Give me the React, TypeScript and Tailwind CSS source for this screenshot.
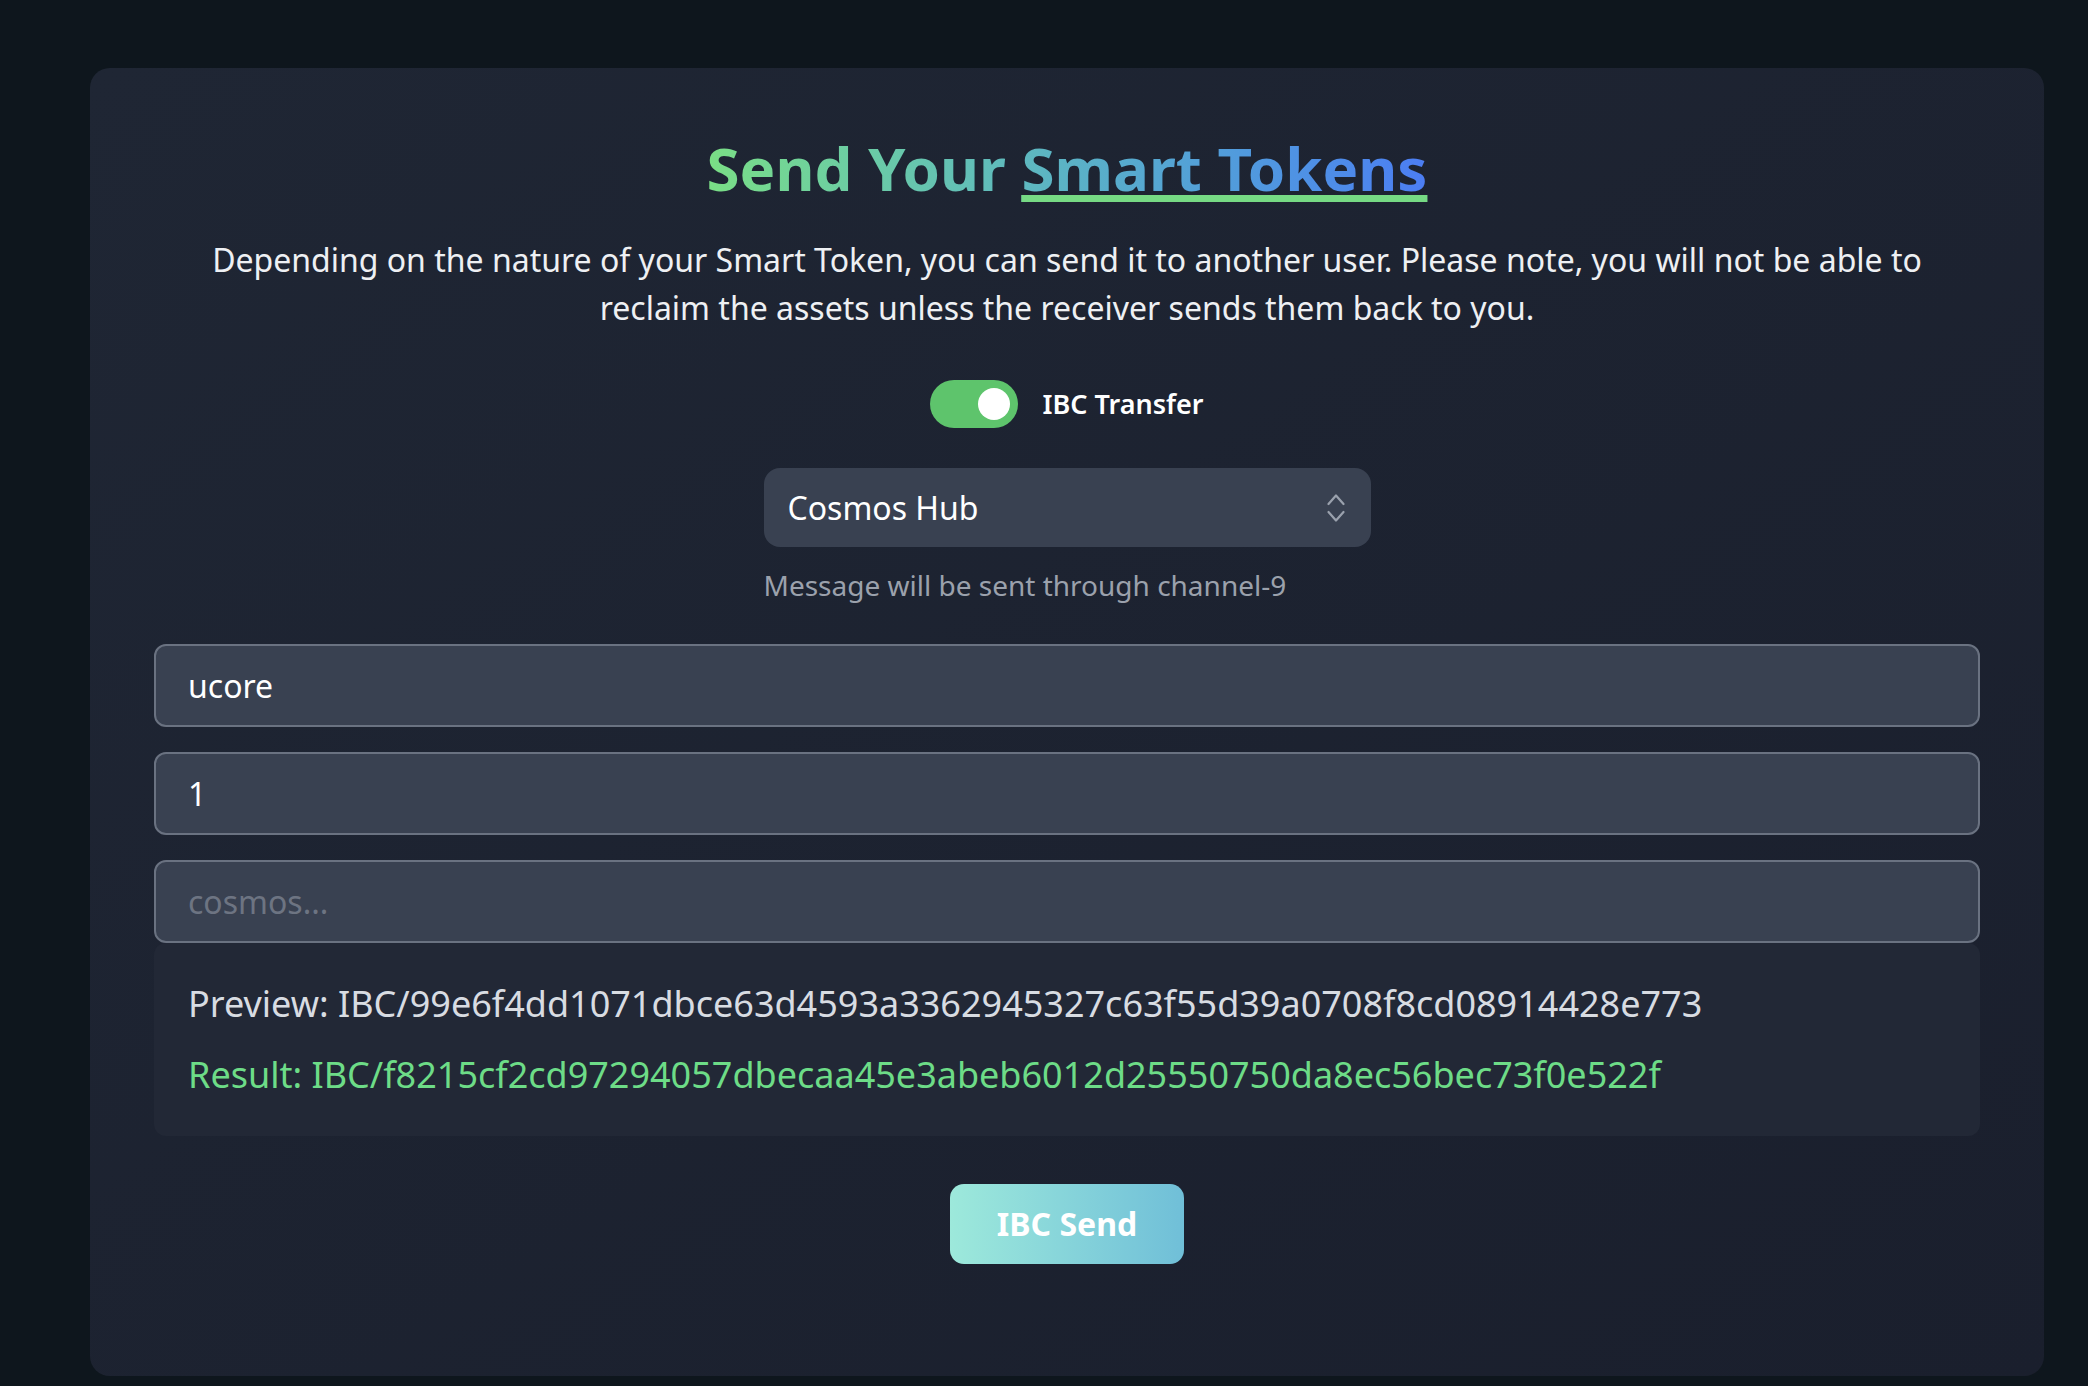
import { useState } from "react";

function ChevronUpDown() {
  return (
    <svg width="18" height="30" viewBox="0 0 18 30" fill="none" stroke="#9aa1ad" strokeWidth="2.2" strokeLinecap="round" strokeLinejoin="round">
      <path d="M1.5 11 L9 2.5 L16.5 11" />
      <path d="M1.5 19 L9 27.5 L16.5 19" />
    </svg>
  );
}

export default function App() {
  const [ibc, setIbc] = useState(true);

  return (
    <div className="min-h-screen bg-[#0e161d] pt-[68px] pl-[90px] pr-[44px] font-['Noto_Sans',sans-serif]">
      <div className="rounded-[20px] bg-gradient-to-br from-[#1f2634] to-[#1a1f2d] px-16 pt-[60px] pb-[112px]">
        {/* Heading */}
        <h1 className="text-center text-[60px] font-bold leading-[80px]">
          <span className="bg-gradient-to-r from-[#7ade85] to-[#4c7df3] bg-clip-text text-transparent">
            Send Your{" "}
            <span className="underline decoration-[#76da84] decoration-[length:7px] underline-offset-[4px]">
              Smart Tokens
            </span>
          </span>
        </h1>

        <p className="mx-auto mt-[28px] max-w-[1760px] text-center text-[32px] leading-[48px] text-[#eef0f3]">
          Depending on the nature of your Smart Token, you can send it to another user. Please note, you will not be able to
          reclaim the assets unless the receiver sends them back to you.
        </p>

        {/* IBC toggle */}
        <div className="mt-12 flex items-center justify-center gap-6">
          <button
            onClick={() => setIbc(!ibc)}
            className={`flex h-12 w-[88px] rounded-full p-2 ${ibc ? "justify-end bg-[#5ec46c]" : "justify-start bg-gray-600"}`}
          >
            <span className="size-8 rounded-full bg-white" />
          </button>
          <span className="text-[27px] font-semibold text-white">IBC Transfer</span>
        </div>

        {/* Chain select */}
        <div className="mx-auto mt-10 w-[607px]">
          <div className="flex h-[79px] items-center justify-between rounded-2xl bg-[#394151] pl-6 pr-[26px] text-[32px] text-white">
            <span>Cosmos Hub</span>
            <ChevronUpDown />
          </div>
          <p className="mt-5 text-[28px] leading-9 text-[#9ba1ac]">Message will be sent through channel-9</p>
        </div>

        {/* Fields */}
        <div className="mt-[41px] flex flex-col gap-[25px]">
          <input
            readOnly
            value="ucore"
            className="h-[83px] w-full rounded-xl border-2 border-[#6a7281] bg-[#394151] px-8 text-[32px] text-white outline-none"
          />
          <input
            readOnly
            value="1"
            className="h-[83px] w-full rounded-xl border-2 border-[#6a7281] bg-[#394151] px-8 text-[32px] text-white outline-none"
          />
          <input
            placeholder="cosmos..."
            className="h-[83px] w-full rounded-xl border-2 border-[#6a7281] bg-[#394151] px-8 text-[32px] text-white outline-none placeholder:text-[#6d7482]"
          />
        </div>

        <div className="flex flex-col gap-[17px] rounded-xl bg-[#222836] px-[34px] py-[34px] text-[36px] leading-[54px]">
          <p className="text-[#d8dce2]">Preview: IBC/99e6f4dd1071dbce63d4593a3362945327c63f55d39a0708f8cd08914428e773</p>
          <p className="text-[#6ddc87]">Result: IBC/f8215cf2cd97294057dbecaa45e3abeb6012d25550750da8ec56bec73f0e522f</p>
        </div>

        <button className="mx-auto mt-12 block h-20 w-[234px] rounded-[14px] bg-gradient-to-r from-[#9de9db] to-[#70bfd8] text-[32px] font-bold text-white">
          IBC Send
        </button>
      </div>
    </div>
  );
}
